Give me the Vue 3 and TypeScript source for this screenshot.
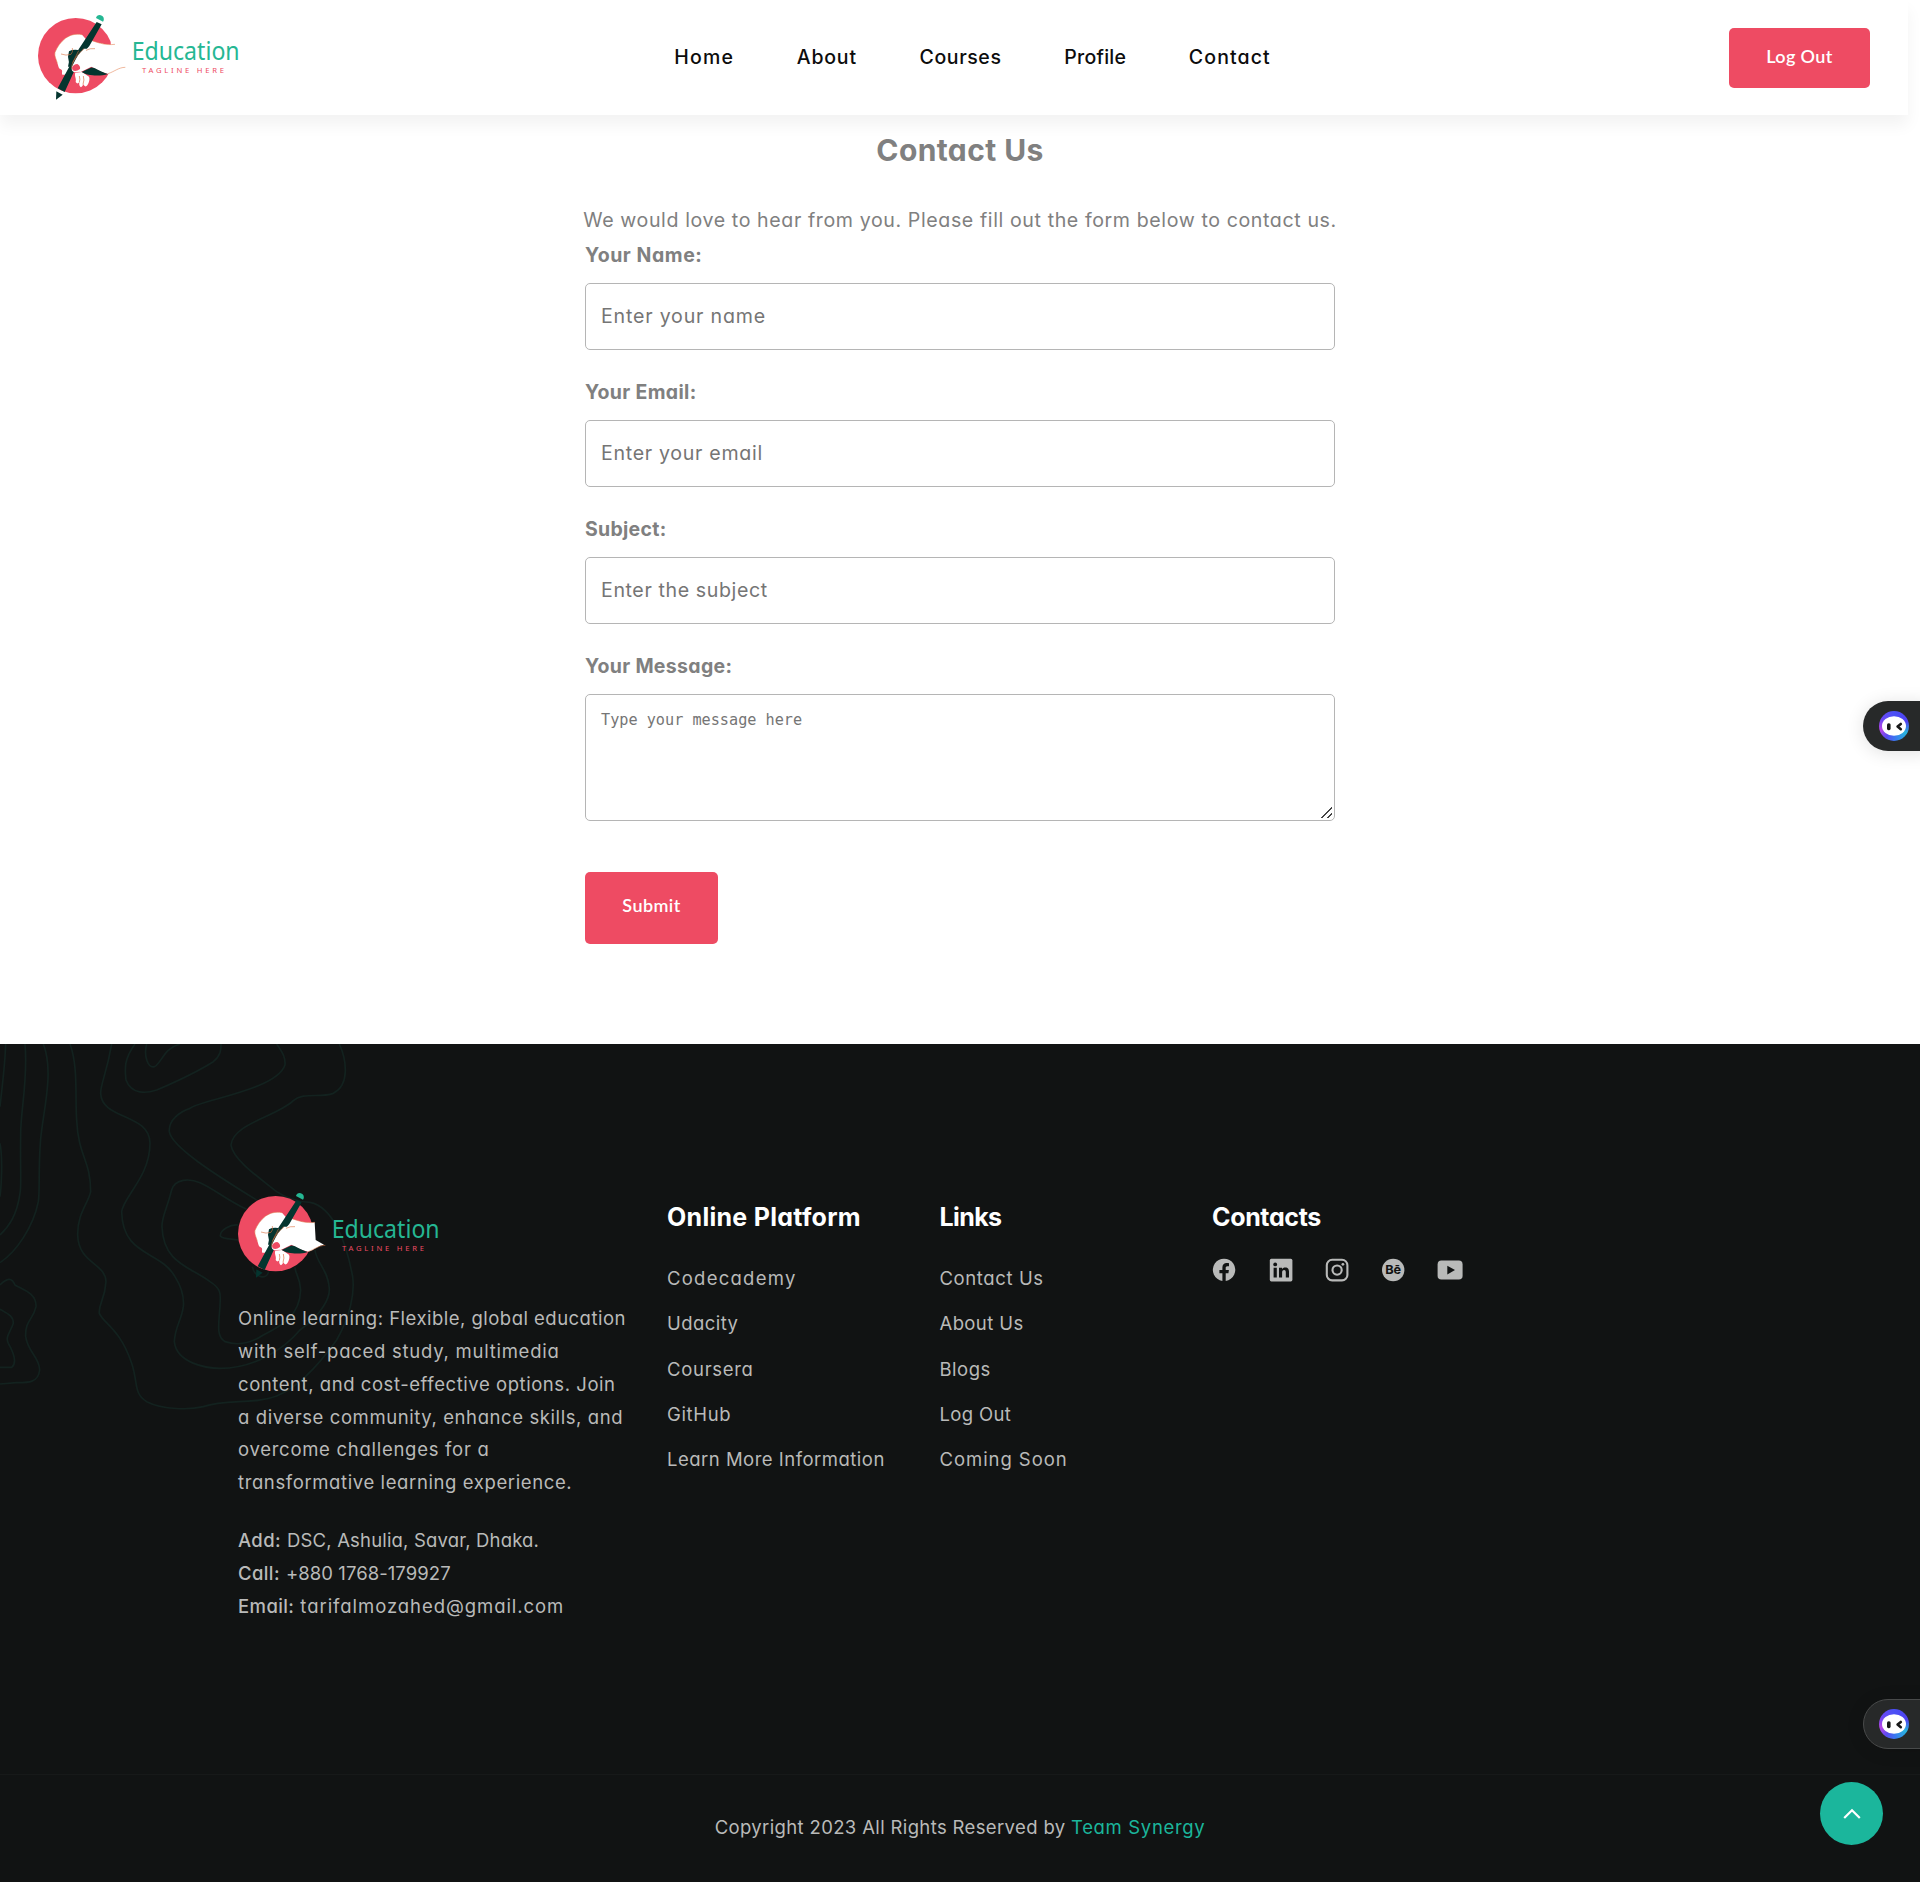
<script setup lang="ts">
import { ref } from 'vue'

interface Label {
  text: string
  tracking: number
}
interface Field extends Label {
  id: string
  placeholder: string
  hintTracking: number
}

const nav: Label[] = [
  { text: 'Home', tracking: 1.2 },
  { text: 'About', tracking: 0.8 },
  { text: 'Courses', tracking: 0.6 },
  { text: 'Profile', tracking: 0.25 },
  { text: 'Contact', tracking: 1.1 },
]

const fields: Field[] = [
  { id: 'name', text: 'Your Name:', tracking: 0.55, placeholder: 'Enter your name', hintTracking: 0.8 },
  { id: 'email', text: 'Your Email:', tracking: 0.34, placeholder: 'Enter your email', hintTracking: 0.69 },
  { id: 'subject', text: 'Subject:', tracking: 0.28, placeholder: 'Enter the subject', hintTracking: 0.6 },
]

const about: Label[] = [
  { text: 'Online learning: Flexible, global education', tracking: 0.48 },
  { text: 'with self-paced study, multimedia', tracking: 0.74 },
  { text: 'content, and cost-effective options. Join', tracking: 0.56 },
  { text: 'a diverse community, enhance skills, and', tracking: 0.59 },
  { text: 'overcome challenges for a', tracking: 0.72 },
  { text: 'transformative learning experience.', tracking: 0.61 },
]

const details = [
  { key: 'Add:', text: 'DSC, Ashulia, Savar, Dhaka.', tracking: 0.17 },
  { key: 'Call:', text: '+880 1768-179927', tracking: 0.07 },
  { key: 'Email:', text: 'tarifalmozahed@gmail.com', tracking: 0.94 },
]

const columns: { title: Label; links: Label[] }[] = [
  {
    title: { text: 'Online Platform', tracking: 0.28 },
    links: [
      { text: 'Codecademy', tracking: 1.25 },
      { text: 'Udacity', tracking: 0.45 },
      { text: 'Coursera', tracking: 0.7 },
      { text: 'GitHub', tracking: 0.65 },
      { text: 'Learn More Information', tracking: 0.49 },
    ],
  },
  {
    title: { text: 'Links', tracking: -0.6 },
    links: [
      { text: 'Contact Us', tracking: 0.61 },
      { text: 'About Us', tracking: 0.39 },
      { text: 'Blogs', tracking: 0.5 },
      { text: 'Log Out', tracking: 0.35 },
      { text: 'Coming Soon', tracking: 0.94 },
    ],
  },
]

const logos = ['header', 'footer']
const values = ref<Record<string, string>>({ name: '', email: '', subject: '', message: '' })
const px = (n: number) => ({ letterSpacing: n + 'px' })
</script>

<template>
  <div class="page">
    <svg width="0" height="0" class="defs" aria-hidden="true">
      <defs>
        <symbol v-for="l in logos" :id="'logo-' + l" :key="l" viewBox="114 42 612 264">
          <circle cx="227" cy="167" r="113" fill="#ee4b63" />
          <path v-if="l === 'header'" d="M300 130 L332 136 L334 90 L380 90 L380 222 L334 222 L324 221 L300 214 Z" fill="#fff" />
          <!-- hand -->
          <path
            d="M187 224 C184 218 190 212 182 208 C174 204 176 198 172 190 C170 180 162 168 165 157 C172 140 182 126 196 115 C210 105 226 100 246 104 L258 118 L276 122 C300 130 318 136 344 133 L347 186 L372 200 C356 202 345 215 324 221 L300 214 L274 200 L242 216 L214 210 L204 216 C200 222 192 226 187 224 Z"
            fill="#fff"
          />
          <path d="M172 190 C170 180 162 168 165 157 C172 140 182 126 196 115 C210 105 226 100 246 104 M276 122 C300 130 318 136 345 133 M324 221 C345 214 356 202 376 202" fill="none" stroke="#e07a4a" stroke-width="1.6" />
          <!-- lower fingers -->
          <path d="M226 218 C222 226 230 236 227 246 Q232 254 238 247 Q236 258 243 262 Q250 258 249 252 Q256 264 262 256 C268 246 270 236 267 230 L246 216 Z" fill="#fff" />
          <path d="M238 247 Q241 238 238 228 M249 253 Q254 240 250 228" stroke="#e0764f" stroke-width="2.2" fill="none" />
          <path d="M245 216 L272 203 C284 200 302 217 324 222 C300 230 262 228 245 216 Z" fill="#04352f" />
          <path d="M207 154 Q220 147 240 151 L228 168 L214 200 L204 200 Q209 184 204 170 Z" fill="#04352f" />
          <path d="M290 66 L305 73 L268 138 Q262 148 250 153 L194 276 L173 265 L236 148 Z" fill="#04352f" />
          <path d="M252 146 C238 158 229 172 221 190 C213 204 212 216 226 217 C238 217 244 212 252 208 L276 198 L290 146 Z" fill="#fff" />
          <path d="M252 146 C236 160 213 186 215 206 M236 152 L218 188 M183 162 Q198 168 213 163 Q220 156 217 144 M258 151 Q270 144 285 146" fill="none" stroke="#d9713f" stroke-width="1.8" />
          <path d="M216 203 Q220 193 232 192 Q242 198 240 207 Q228 216 218 211 Z" fill="#ee4b63" />
          <path d="M168 267 L196 279 L194 285 L165 272 Z" :fill="l === 'header' ? '#fff' : '#111313'" />
          <path d="M169 274 L188 284 L168 299 Z" fill="#04352f" />
          <path d="M284 58 L306 70 L310 63 L288 51 Z" :fill="l === 'header' ? '#fff' : '#111313'" />
          <path d="M288 54 C290 42 306 42 311 53 Q313 60 309 65 Z" fill="#25b793" />
          <text x="395" y="179" textLength="324" lengthAdjust="spacingAndGlyphs" font-family="'Noto Sans', sans-serif" font-size="74" fill="#25b793">Education</text>
          <text x="426" y="218" textLength="246" font-family="'Noto Sans', sans-serif" font-size="23" fill="#ee4b63">TAGLINE HERE</text>
        </symbol>
      </defs>
    </svg>

    <header class="header">
      <svg class="logo" width="204" height="88"><use href="#logo-header" /></svg>
      <nav class="nav">
        <a v-for="n in nav" :key="n.text" :style="px(n.tracking)">{{ n.text }}</a>
      </nav>
      <button class="btn logout">Log Out</button>
    </header>

    <main class="main">
      <h1>Contact Us</h1>
      <p class="intro">We would love to hear from you. Please fill out the form below to contact us.</p>
      <form @submit.prevent>
        <div v-for="f in fields" :key="f.id" class="group">
          <label :for="f.id" :style="px(f.tracking)">{{ f.text }}</label>
          <input :id="f.id" v-model="values[f.id]" :placeholder="f.placeholder" :style="px(f.hintTracking)" />
        </div>
        <div class="group">
          <label for="message">Your Message:</label>
          <textarea id="message" v-model="values.message" placeholder="Type your message here"></textarea>
        </div>
        <button class="btn submit">Submit</button>
      </form>
    </main>

    <footer class="footer">
      <svg class="contours" viewBox="0 42 1180 1110" width="393.3" height="370" aria-hidden="true">
        <g fill="none" stroke="#13221f" stroke-width="5">
          <path d="M17 42 C15 110 5 180 0 230" />
          <path d="M75 42 C85 150 60 250 62 320 C60 400 65 470 60 490 C50 560 25 590 0 615" />
          <path d="M130 42 C165 130 125 260 121 340 C115 420 120 480 115 515 C100 590 50 665 0 698" />
          <path d="M210 42 C235 110 225 200 230 270 C235 380 272 390 272 485 C265 520 232 550 233 615 C235 700 317 700 318 755 C315 810 295 820 298 850 C310 880 360 895 395 1000 C415 1060 400 1090 440 1115 C490 1140 570 1140 610 1130 C680 1105 760 1125 830 1098 C900 1070 960 1000 1010 930 C1050 860 1065 790 1058 740 C1040 640 1000 530 930 517 C890 515 860 505 830 485 C780 445 700 390 693 345 C700 280 830 260 880 212 C910 185 960 205 1000 190 C1050 165 1040 90 1018 42" />
          <path d="M335 42 C320 130 302 160 302 190 C305 270 450 250 450 340 C450 440 370 500 365 545 C368 680 480 660 525 740 C550 780 552 810 550 830 C545 870 525 890 523 935 C530 1000 620 1015 660 1015 C760 1015 850 960 900 900 C970 850 990 800 988 775 C985 720 950 700 945 660" />
          <path d="M830 42 C850 70 857 85 855 105 C830 180 600 210 570 235 C540 245 505 270 508 305 C515 350 640 430 770 510" />
          <path d="M405 42 C370 90 375 120 378 150 C395 195 440 190 470 180 C540 150 600 120 640 95 C665 75 663 55 663 42" />
          <path d="M440 42 C430 80 445 115 463 110 C485 100 490 55 540 42" />
          <path d="M740 538 C680 510 640 475 600 458 C570 445 525 445 515 480 C500 540 485 560 486 590 C490 700 570 710 630 755 C670 780 660 800 660 830 C655 890 650 920 675 935 C720 950 760 935 790 915 C840 890 900 860 902 780 C900 740 885 730 885 712" />
          <path d="M714 585 C690 583 660 600 661 618 C670 630 700 625 714 630 M757 710 C765 745 800 750 806 725" />
          <path d="M0 765 C20 745 35 740 45 765 C70 780 110 790 108 830 C100 870 75 870 77 920 C85 970 118 980 119 1020 C115 1060 80 1058 50 1058 L0 1062" />
          <path d="M0 838 C20 850 40 855 40 880 C30 910 15 920 25 940 C45 975 50 1000 35 1012 L0 1012" />
          <path d="M0 340 C8 380 5 460 0 500" />
        </g>
      </svg>

      <div class="cols">
        <section class="about">
          <svg class="logo" width="204" height="88"><use href="#logo-footer" /></svg>
          <p class="blurb">
            <span v-for="a in about" :key="a.text" :style="px(a.tracking)">{{ a.text }}</span>
          </p>
          <p class="details">
            <span v-for="d in details" :key="d.key"><b>{{ d.key }}</b><span :style="px(d.tracking)">{{ d.text }}</span></span>
          </p>
        </section>
        <section v-for="c in columns" :key="c.title.text">
          <h2 :style="px(c.title.tracking)">{{ c.title.text }}</h2>
          <ul>
            <li v-for="l in c.links" :key="l.text"><a :style="px(l.tracking)">{{ l.text }}</a></li>
          </ul>
        </section>
        <section>
          <h2 class="contacts">Contacts</h2>
          <div class="social">
            <svg viewBox="0 0 28 28"><path fill="#b9bab9" d="M12.4 25 V17.2 H9.4 V13.9 H12.4 V11.6 C12.4 8.6 14 7.1 16.7 7.1 C17.7 7.1 18.6 7.2 19 7.3 V10.2 H17.4 C16 10.2 15.7 10.9 15.7 12 V13.9 H18.9 L18.4 17.2 H15.7 V25 A11.2 11.2 0 1 0 12.4 25 Z" /></svg>
            <svg viewBox="0 0 28 28"><rect x="2.8" y="2.8" width="22.6" height="22.6" rx="1.6" fill="#b9bab9" /><g fill="#111313"><circle cx="8.2" cy="8.4" r="1.9" /><path d="M6.6 11.7 H9.8 V21.6 H6.6 Z M12 11.7 H15 V13.1 C15.6 12.1 16.7 11.4 18.2 11.4 C21.2 11.4 22 13.3 22 16 V21.6 H18.8 V16.6 C18.8 15.2 18.5 14.1 17.1 14.1 C15.7 14.1 15.1 15.2 15.1 16.6 V21.6 H12 Z" /></g></svg>
            <svg viewBox="0 0 28 28"><g fill="none" stroke="#b9bab9" stroke-width="2.1"><rect x="3.8" y="3.8" width="20.6" height="20.6" rx="5.4" /><circle cx="14.1" cy="14.1" r="4.6" /></g><circle cx="19.9" cy="8.3" r="1.4" fill="#b9bab9" /></svg>
            <svg viewBox="0 0 28 28"><circle cx="14.2" cy="14" r="11.2" fill="#b9bab9" /><text x="6.2" y="18.4" textLength="16" lengthAdjust="spacingAndGlyphs" font-family="Inter, sans-serif" font-weight="700" font-size="12.4" fill="#111313">Bē</text></svg>
            <svg viewBox="0 0 28 28"><rect x="1.6" y="4.6" width="25" height="19" rx="3.8" fill="#b9bab9" /><path d="M11.3 9.8 L19 14.1 L11.3 18.4 Z" fill="#111313" /></svg>
          </div>
        </section>
      </div>

      <div class="copyright">
        <span class="rights">Copyright 2023 All Rights Reserved by</span>
        <a>Team Synergy</a>
      </div>
    </footer>

    <div v-for="w in ['light', 'dark']" :key="w" class="assistant" :class="w">
      <span class="ring">
        <svg width="24" height="20" viewBox="0 0 24 20">
          <ellipse cx="12" cy="10" rx="12" ry="9.8" fill="#fff" />
          <rect x="5" y="7.2" width="3.6" height="7" rx="1.6" fill="#181818" />
          <path d="M18.8 8 L15.6 10.6 L18.8 13.2" fill="none" stroke="#181818" stroke-width="2.6" stroke-linecap="round" stroke-linejoin="round" />
        </svg>
      </span>
    </div>
    <button class="totop" aria-label="Back to top">
      <svg width="18" height="12" viewBox="0 0 18 12"><path d="M1.2 10 L9 2.2 L16.8 10" fill="none" stroke="#fff" stroke-width="2.2" /></svg>
    </button>
  </div>
</template>

<style>
body {
  margin: 0;
  background: #fff;
}
</style>

<style scoped>
.page {
  position: relative;
  width: 1920px;
  height: 1882px;
  overflow: hidden;
  display: flex;
  flex-direction: column;
  font-family: Inter, sans-serif;
  font-feature-settings: 'cv11';
  background: #fff;
}
.defs {
  position: absolute;
}
.logo {
  display: block;
}
h1, h2, p, ul {
  margin: 0;
  padding: 0;
}
.header {
  box-sizing: border-box;
  width: 1908px;
  height: 115px;
  padding: 0 38px;
  display: flex;
  align-items: center;
  justify-content: space-between;
  background: #fff;
  box-shadow: 0 10px 15px rgba(25, 25, 25, 0.05);
  flex: none;
}
.nav {
  display: flex;
  gap: 62.7px;
  margin-right: 26px;
  padding-bottom: 2px;
  font-size: 19.5px;
  font-weight: 450;
  line-height: 34px;
  color: #0c0c0c;
}
.btn {
  border: 0;
  border-radius: 5px;
  background: #ee4b63;
  color: #fff;
  font: 600 18px Lato, sans-serif;
  letter-spacing: 0.4px;
}
.logout {
  width: 141px;
  height: 60px;
  padding: 0 0 4px;
}
.main {
  height: 929px;
  padding-top: 15px;
  box-sizing: border-box;
  display: flex;
  flex-direction: column;
  align-items: center;
  color: #808080;
  flex: none;
}
h1 {
  font-size: 30px;
  font-weight: 650;
  letter-spacing: 0.4px;
  line-height: 41px;
}
.intro {
  margin-top: 32px;
  font-size: 19.6px;
  line-height: 34px;
  letter-spacing: 0.6px;
  white-space: nowrap;
}
form {
  width: 750px;
  margin-top: 1px;
}
.group {
  display: flex;
  flex-direction: column;
  margin-bottom: 25px;
}
label {
  font-size: 19.5px;
  font-weight: 650;
  letter-spacing: 0.32px;
  line-height: 34px;
  margin-bottom: 11px;
}
input, textarea {
  box-sizing: border-box;
  width: 100%;
  height: 67px;
  padding: 0 15px 2px;
  border: 1px solid #b5b5b5;
  border-radius: 5px;
  background: #fff;
  font: 19.6px Inter, sans-serif;
  font-feature-settings: 'cv11';
  outline: none;
}
input::placeholder, textarea::placeholder {
  color: #757575;
  opacity: 1;
}
textarea {
  height: 127px;
  padding: 15px;
  font: 15.2px/20px 'DejaVu Sans Mono', monospace;
  resize: both;
}
textarea::-webkit-resizer {
  background: linear-gradient(135deg, transparent 48%, #444 48%, #444 57%, transparent 57%, transparent 73%, #444 73%, #444 82%, transparent 82%) 2px 2px / 11px 11px no-repeat;
}
.submit {
  display: block;
  width: 133px;
  height: 72px;
  margin-top: 51px;
  padding: 0 0 6px;
}
.footer {
  position: relative;
  height: 838px;
  background: #111313;
  color: #b9bab9;
  font-size: 18.5px;
  flex: none;
}
.contours {
  position: absolute;
  left: 0;
  top: 0;
}
.cols {
  position: relative;
  box-sizing: border-box;
  height: 731px;
  padding: 149px 0 0 238px;
  display: grid;
  grid-template-columns: 429px 272.5px 272.5px 300px;
  border-bottom: 1px solid #171919;
}
.about .logo {
  margin-top: -0.6px;
}
.blurb, .details {
  display: flex;
  flex-direction: column;
  line-height: 32.8px;
  white-space: nowrap;
}
.blurb {
  margin-top: 21.8px;
}
.details {
  margin-top: 25.4px;
}
.details b {
  font-weight: 500;
  letter-spacing: 0.4px;
  margin-right: 6px;
}
h2 {
  margin-top: 7px;
  font-size: 25px;
  font-weight: 700;
  line-height: 34px;
  color: #fff;
}
.contacts {
  letter-spacing: -0.34px;
}
ul {
  list-style: none;
  margin-top: 22px;
}
li {
  line-height: 45.25px;
}
.social {
  display: flex;
  gap: 28.3px;
  margin: 21.5px 0 0 -1.6px;
}
.social svg {
  width: 28px;
  height: 28px;
}
.copyright {
  display: flex;
  justify-content: center;
  gap: 5.5px;
  margin-top: 35px;
  line-height: 34px;
}
.copyright .rights {
  letter-spacing: 0.36px;
}
.copyright a {
  color: #1bb69c;
  letter-spacing: 0.66px;
}
.assistant {
  position: absolute;
  right: -10px;
  box-sizing: border-box;
  width: 67px;
  height: 50px;
  padding-left: 16px;
  display: flex;
  align-items: center;
  border-radius: 25px 0 0 25px;
  background: #272929;
  box-shadow: 0 2px 18px rgba(0, 0, 0, 0.12);
}
.light {
  top: 701px;
}
.dark {
  top: 1699px;
  padding-left: 15px;
  border: 1px solid #484a4a;
}
.ring {
  width: 30px;
  height: 30px;
  display: flex;
  align-items: center;
  justify-content: center;
  border-radius: 50%;
  background: conic-gradient(#4a50f5, #5040f0 70deg, #28b4dc 120deg, #3a78f0 175deg, #5a4af0 215deg, #b845e6 255deg, #6a48f5 300deg, #4a50f5);
}
.totop {
  position: absolute;
  left: 1820px;
  top: 1782px;
  width: 63px;
  height: 63px;
  padding: 0;
  border: 0;
  border-radius: 50%;
  background: #1bb69c;
  display: flex;
  align-items: center;
  justify-content: center;
}
</style>
